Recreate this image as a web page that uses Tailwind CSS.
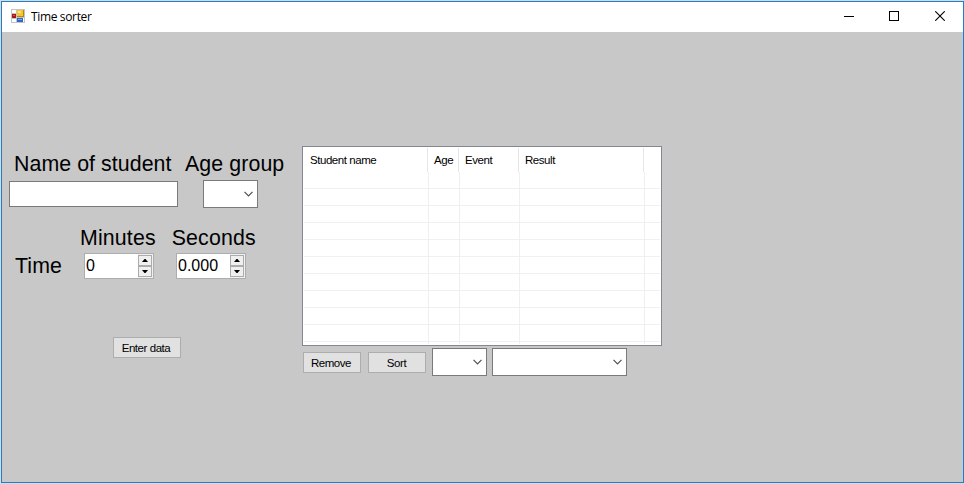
<!DOCTYPE html>
<html lang="en">
<head>
<meta charset="utf-8">
<title>Time sorter</title>
<script src="https://cdn.jsdelivr.net/npm/@tailwindcss/browser@4"></script>
</head>
<body class="w-[964px] h-[484px] overflow-hidden bg-[#dcd9d6] pl-px pt-px text-black font-['Liberation_Sans',sans-serif]">
<div class="w-[963px] h-[482px] border border-[#1a80d0] bg-[#c8c8c8] flex flex-col">
  <header class="h-[30px] shrink-0 bg-white flex items-center justify-between">
    <div class="flex items-center pl-[9px] pb-[2px]">
      <svg width="14" height="14" viewBox="0 0 14 14" shape-rendering="crispEdges">
        <path fill="#c4c4c4" d="M0 0h14v14H0z"/>
        <path fill="#fff" d="M1 1h4v3H1zM1 10h4v3H1zM12 9h1v4h-1z"/>
        <path fill="#b8860b" d="M6 1h7v7H6z"/><path fill="#f7c52f" d="M6 1h6v6H6z"/><path fill="#fde487" d="M7 2h3v2H7z"/>
        <path fill="#a01818" d="M1 5h4v4H1z"/><path fill="#dd5244" d="M2 6h2v1H2z"/>
        <path fill="#3464c8" d="M6 9h6v4H6z"/><path fill="#77a6f3" d="M7 10h4v1H7z"/>
      </svg>
      <h1 class="ml-[6px] pt-[2px] whitespace-nowrap font-['Open_Sans',sans-serif] text-[12px] leading-[16px] tracking-[-0.35px]">Time sorter</h1>
    </div>
    <div class="flex items-center pr-[18px] pb-[2px]">
      <svg width="10" height="10" viewBox="0 0 10 10" shape-rendering="crispEdges"><path d="M0 5h10v1H0z"/></svg>
      <svg class="ml-[35px]" width="10" height="10" viewBox="0 0 10 10" fill="none" stroke="#000" shape-rendering="crispEdges"><path d="M.5 .5h9v9h-9z"/></svg>
      <svg class="ml-[36px]" width="10" height="10" viewBox="0 0 10 10" fill="none" stroke="#000" stroke-width="1.1"><path d="M.2 .2l9.6 9.6M9.8 .2L.2 9.8"/></svg>
    </div>
  </header>
  <main class="flex items-start pt-[114px]">
    <section class="w-[300px] shrink-0 pl-[7px]">
      <div class="flex gap-[7px] pt-[6px]">
        <label class="w-[169px] pl-[5px] whitespace-nowrap text-[21.33px] leading-[24px] tracking-[0.07px]">Name of student</label>
        <label class="whitespace-nowrap text-[21.33px] leading-[24px] tracking-[0.1px]">Age group</label>
      </div>
      <div class="mt-[4px] flex items-center gap-[25px]">
        <div class="w-[169px] h-[26px] border border-[#7a7a7a] bg-white"></div>
        <div class="w-[55px] h-[28px] border border-[#7a7a7a] bg-white flex items-center justify-end pr-[4px]">
          <svg width="9" height="6" viewBox="0 0 9 6" fill="none" stroke="#505050" stroke-width="1.2"><path d="M.5 .8l4 4 4-4"/></svg>
        </div>
      </div>
      <div class="mt-[18px] flex pl-[71px] gap-[16px] text-[21.33px] leading-[24px] tracking-[0.15px]">
        <span>Minutes</span><span>Seconds</span>
      </div>
      <div class="mt-[3px] flex items-center pl-[6px]">
        <span class="w-[69px] text-[21.33px] leading-[24px] tracking-[0.1px]">Time</span>
        <div class="w-[70px] h-[26px] border border-[#abadb3] bg-[#f0f0f0] flex">
          <span class="w-[53px] bg-white pl-px text-[16px] leading-[24px]">0</span>
          <div class="w-[14px] py-px flex flex-col">
            <span class="h-[11px] border border-[#acacac] bg-[#efefef] flex items-center justify-center"><svg width="6" height="3" viewBox="0 0 6 3"><path d="M0 3L2.5 0h1L6 3z"/></svg></span>
            <span class="h-[11px] border border-[#acacac] bg-[#efefef] flex items-center justify-center"><svg width="6" height="3" viewBox="0 0 6 3"><path d="M0 0L2.5 3h1L6 0z"/></svg></span>
          </div>
        </div>
        <div class="ml-[22px] w-[70px] h-[26px] border border-[#abadb3] bg-[#f0f0f0] flex">
          <span class="w-[53px] bg-white pl-px text-[16px] leading-[24px]">0.000</span>
          <div class="w-[14px] py-px flex flex-col">
            <span class="h-[11px] border border-[#acacac] bg-[#efefef] flex items-center justify-center"><svg width="6" height="3" viewBox="0 0 6 3"><path d="M0 3L2.5 0h1L6 3z"/></svg></span>
            <span class="h-[11px] border border-[#acacac] bg-[#efefef] flex items-center justify-center"><svg width="6" height="3" viewBox="0 0 6 3"><path d="M0 0L2.5 3h1L6 0z"/></svg></span>
          </div>
        </div>
      </div>
      <button class="mt-[58px] ml-[104px] flex items-start justify-center w-[68px] h-[21px] border border-[#adadad] bg-[#e1e1e1] whitespace-nowrap text-[11.5px] leading-[19px] pt-px pr-[2px] tracking-[-0.45px]">Enter data</button>
    </section>
    <section class="w-[360px] shrink-0">
      <div class="h-[200px] border border-[#828790] bg-white p-px text-[11.5px] tracking-[-0.45px] flex flex-col">
        <div class="h-[24px] shrink-0 flex leading-[24px]">
          <span class="w-[124px] border-r border-[#e5e5e5] pl-[6px]">Student name</span>
          <span class="w-[31px] border-r border-[#e5e5e5] pl-[6px]">Age</span>
          <span class="w-[60px] border-r border-[#e5e5e5] pl-[6px]">Event</span>
          <span class="w-[125px] border-r border-[#e5e5e5] pl-[6px]">Result</span>
        </div>
        <div class="h-[172px] overflow-hidden flex bg-[repeating-linear-gradient(to_bottom,transparent_0_16px,#f0f0f0_16px_17px)]">
          <span class="w-[125px] border-r border-[#f0f0f0]"></span>
          <span class="w-[31px] border-r border-[#f0f0f0]"></span>
          <span class="w-[60px] border-r border-[#f0f0f0]"></span>
          <span class="w-[125px] border-r border-[#f0f0f0]"></span>
        </div>
      </div>
      <div class="mt-[2px] flex items-center pl-px text-[11.5px] tracking-[-0.45px]">
        <button class="flex items-start justify-center w-[58px] h-[21px] border border-[#adadad] bg-[#e1e1e1] leading-[19px] pt-px pr-[2px]">Remove</button>
        <button class="ml-[7px] flex items-start justify-center w-[58px] h-[21px] border border-[#adadad] bg-[#e1e1e1] leading-[19px] pt-px pr-px">Sort</button>
        <div class="ml-[6px] w-[55px] h-[28px] border border-[#7a7a7a] bg-white flex items-center justify-end pr-[4px]">
          <svg width="9" height="6" viewBox="0 0 9 6" fill="none" stroke="#505050" stroke-width="1.2"><path d="M.5 .8l4 4 4-4"/></svg>
        </div>
        <div class="ml-[5px] w-[135px] h-[28px] border border-[#7a7a7a] bg-white flex items-center justify-end pr-[4px]">
          <svg width="9" height="6" viewBox="0 0 9 6" fill="none" stroke="#505050" stroke-width="1.2"><path d="M.5 .8l4 4 4-4"/></svg>
        </div>
      </div>
    </section>
  </main>
</div>
</body>
</html>
